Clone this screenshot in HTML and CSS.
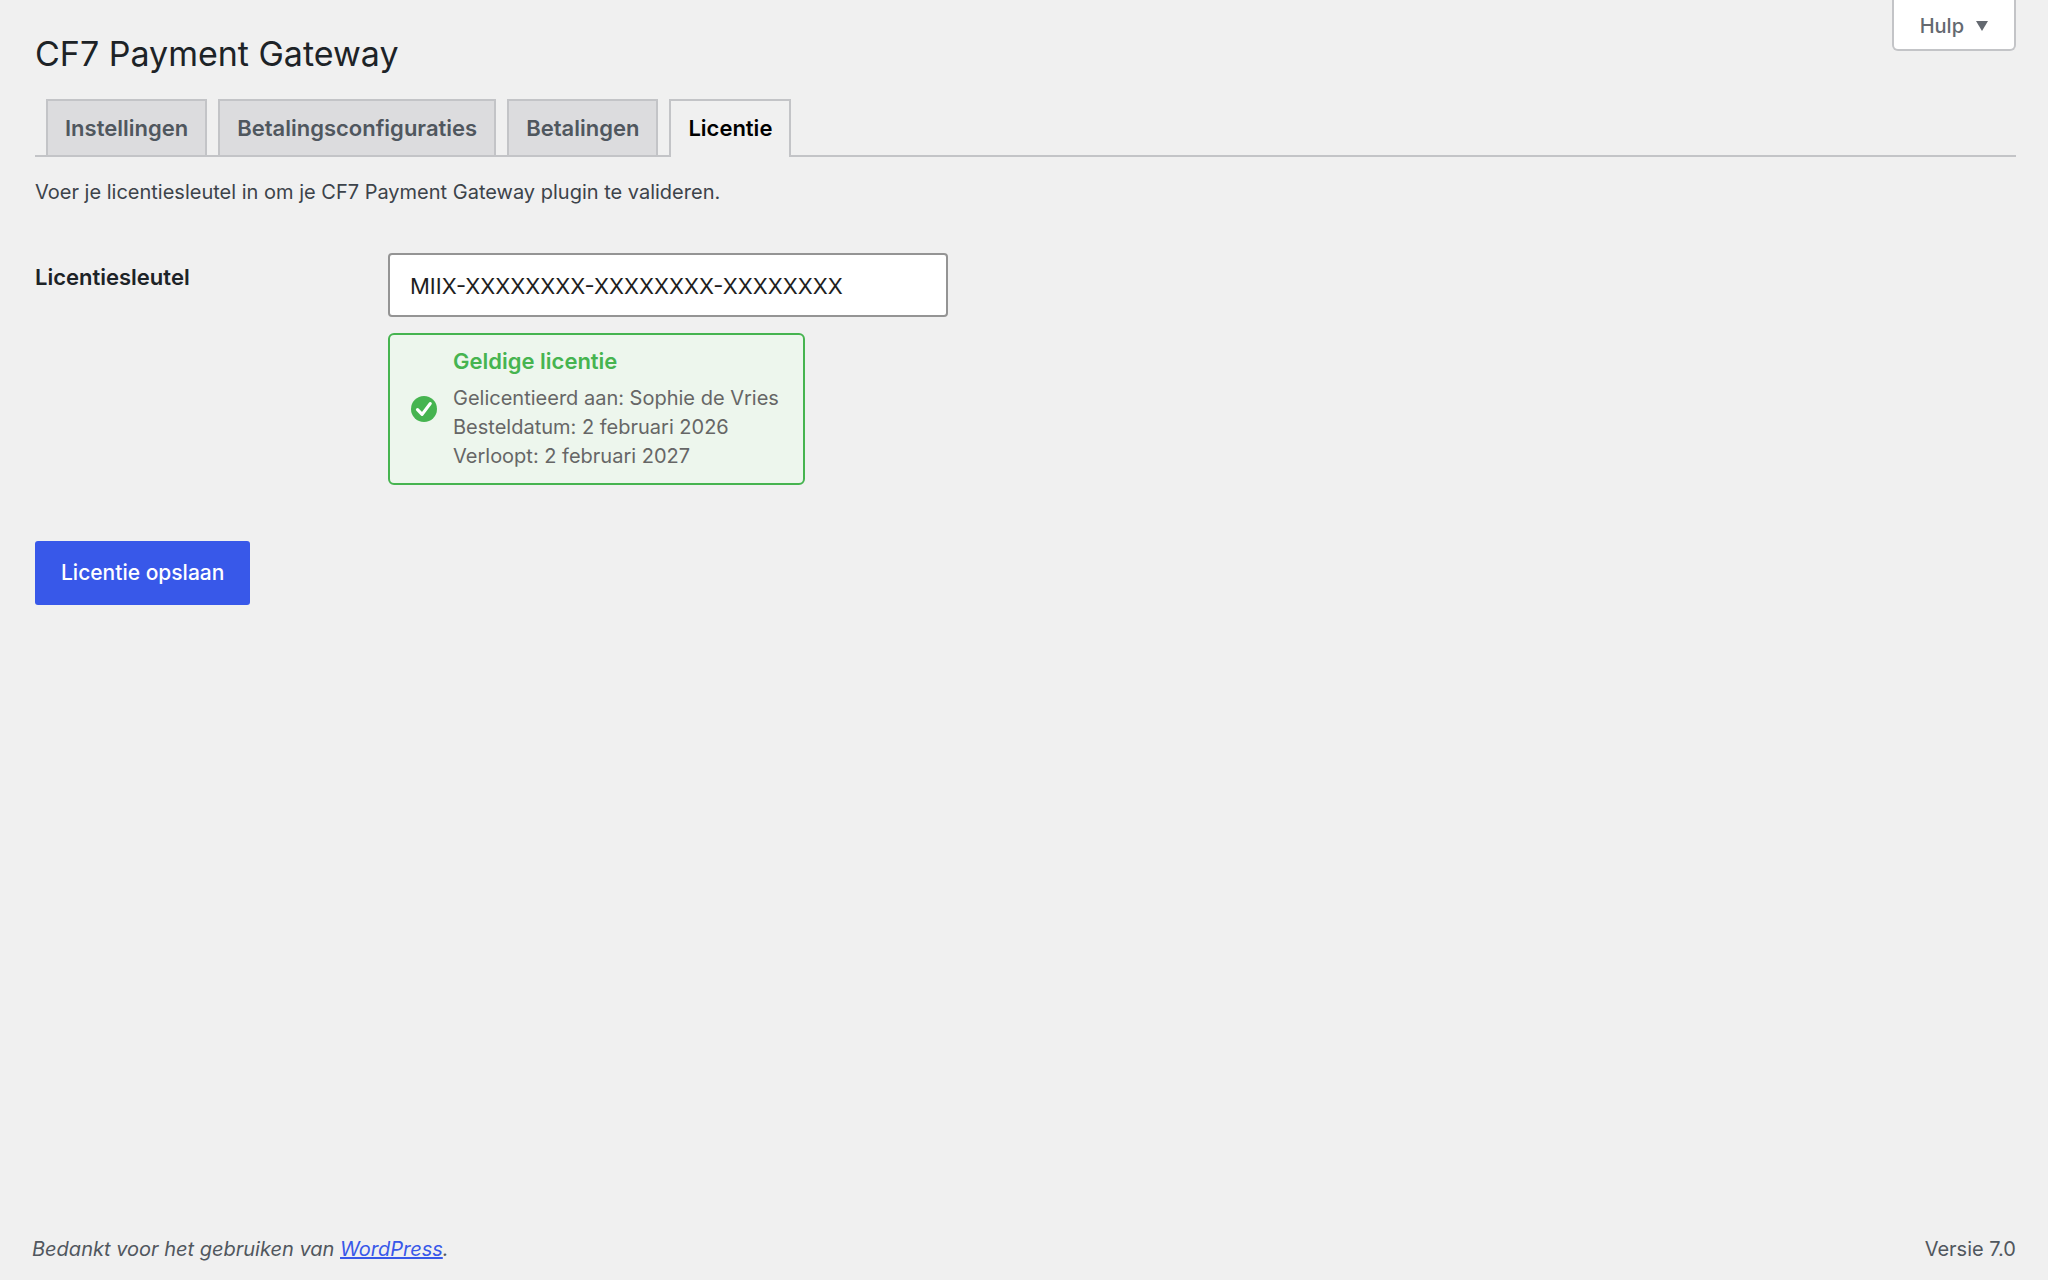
FILE: index.html
```html
<!DOCTYPE html>
<html lang="nl">
<head>
  <meta charset="UTF-8" />
  <meta name="viewport" content="width=device-width, initial-scale=1" />
  <title>CF7 Payment Gateway – Licentie</title>

  <link rel="stylesheet" href="styles.css">
</head>
<body>

  <!-- Hulp -->
  <div class="screen-meta">
    <button type="button" class="help-toggle">
      Hulp
      <svg class="arrow" viewBox="0 0 12 10" aria-hidden="true"><path d="M0 0h12L6 10z" fill="currentColor"/></svg>
    </button>
  </div>

  <main class="wrap">
    <h1>CF7 Payment Gateway</h1>

    <nav class="tabs">
      <a class="tab" href="#instellingen">Instellingen</a>
      <a class="tab" href="#configuraties">Betalingsconfiguraties</a>
      <a class="tab" href="#betalingen">Betalingen</a>
      <a class="tab tab-active" href="#licentie" aria-current="page">Licentie</a>
    </nav>

    <form onsubmit="return false">
      <p class="intro">Voer je licentiesleutel in om je CF7 Payment Gateway plugin te valideren.</p>

      <div class="form-row">
        <label for="licentiesleutel">Licentiesleutel</label>
        <div class="field">
          <input type="text" id="licentiesleutel" class="key" value="MIIX-XXXXXXXX-XXXXXXXX-XXXXXXXX">

          <!-- Status van de licentie -->
          <div class="status">
            <svg class="check" viewBox="0 0 26 26" aria-hidden="true">
              <circle cx="13" cy="13" r="13" fill="#46b450"/>
              <path d="M6.5 13.6l4.6 4.8L19.2 7.6" fill="none" stroke="#fff" stroke-width="3.2" stroke-linecap="round" stroke-linejoin="round"/>
            </svg>
            <div class="status-text">
              <strong>Geldige licentie</strong>
              <span>Gelicentieerd aan: Sophie de Vries</span>
              <span>Besteldatum: 2 februari 2026</span>
              <span>Verloopt: 2 februari 2027</span>
            </div>
          </div>
        </div>
      </div>

      <button type="submit" class="save">Licentie opslaan</button>
    </form>
  </main>

  <footer class="footer">
    <em>Bedankt voor het gebruiken van <a href="#wordpress">WordPress</a>.</em>
    <span>Versie 7.0</span>
  </footer>

</body>
</html>
```
FILE: styles.css
```css
/* ---------- Kleuren ---------- */
:root{
  --bg:#f0f0f0;
  --text:#3c434a;
  --heading:#1d2327;
  --muted:#50575e;
  --border:#c3c4c7;
  --accent:#3858e9;
  --green:#46b450;
}

/* ---------- Basis ---------- */
*{box-sizing:border-box}
body{
  margin:0;
  min-height:100vh;
  padding:0 32px 0 35px;
  display:flex;
  flex-direction:column;
  background:var(--bg);
  color:var(--text);
  font-family:Inter,"Liberation Sans",sans-serif;
  font-size:20px;
  line-height:30px;
}
button,input{font-family:inherit}

/* ---------- Hulp-tab ---------- */
.screen-meta{
  position:absolute;
  top:0;
  right:32px;
}
.help-toggle{
  display:flex;
  align-items:center;
  gap:12px;
  height:51px;
  padding:2px 26px 0;
  border:2px solid var(--border);
  border-top:0;
  border-radius:0 0 6px 6px;
  background:#fff;
  color:#646970;
  font-size:20px;
  font-weight:500;
  cursor:pointer;
}
.arrow{width:12px;height:10px}

/* ---------- Titel en tabs ---------- */
.wrap{flex:1}
h1{
  margin:0;
  padding:30px 0 21px;
  color:var(--heading);
  font-size:34px;
  font-weight:400;
  line-height:48px;
}
.tabs{
  display:flex;
  gap:11px;
  padding-left:11px;
  border-bottom:2px solid var(--border);
}
.tab{
  padding:11px 17px;
  border:2px solid var(--border);
  border-bottom:0;
  background:#dcdcde;
  color:var(--muted);
  font-size:22px;
  font-weight:600;
  line-height:32px;
  text-decoration:none;
}
.tab-active{
  margin-bottom:-2px;
  background:var(--bg);
  color:#000;
}

/* ---------- Formulier ---------- */
.intro{margin:20px 0 46px}
.form-row{
  display:flex;
  align-items:flex-start;
}
.form-row label{
  width:353px;
  padding-top:9px;
  color:var(--heading);
  font-size:22px;
  font-weight:600;
}
.key{
  display:block;
  width:560px;
  max-width:100%;
  height:64px;
  padding:2px 20px 0;
  border:2px solid #949494;
  border-radius:4px;
  background:#fff;
  color:#1e1e1e;
  font-size:22px;
}

/* ---------- Licentiestatus ---------- */
.status{
  display:inline-flex;
  align-items:center;
  gap:16px;
  margin-top:16px;
  padding:12px 24px 12px 21px;
  border:2px solid var(--green);
  border-radius:6px;
  background:#edf6ed;
}
.check{width:26px;height:26px}
.status-text{
  display:flex;
  flex-direction:column;
  color:#666;
  line-height:29px;
}
.status-text strong{
  margin-bottom:8px;
  color:var(--green);
  font-size:22px;
  font-weight:600;
}

.save{
  display:block;
  height:64px;
  margin-top:56px;
  padding:0 26px 2px;
  border:0;
  border-radius:3px;
  background:var(--accent);
  color:#fff;
  font-size:21px;
  font-weight:500;
  cursor:pointer;
}

/* ---------- Voettekst ---------- */
.footer{
  display:flex;
  justify-content:space-between;
  margin-left:-3px;
  padding:16px 0;
  color:var(--muted);
}
.footer a{color:var(--accent)}
```
